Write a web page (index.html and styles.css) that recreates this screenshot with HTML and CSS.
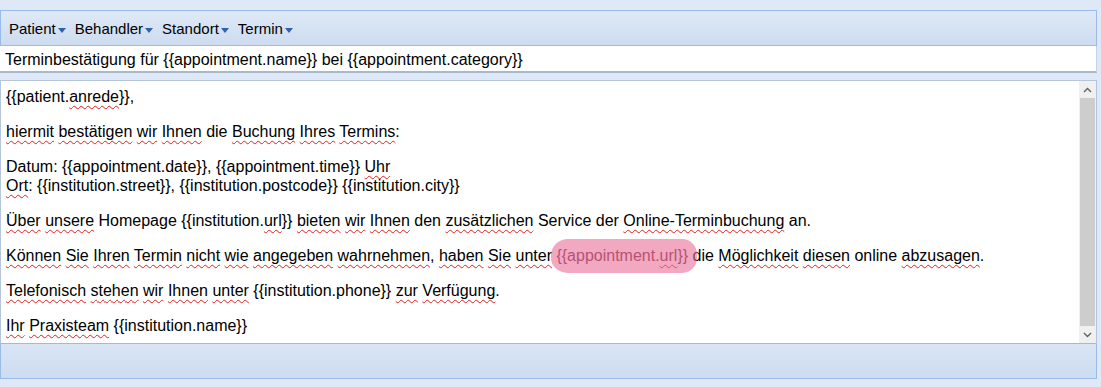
FILE: index.html
```html
<!DOCTYPE html>
<html lang="de">
<head>
    <meta charset="UTF-8">
    <title>Terminbestätigung</title>
    <link rel="stylesheet" href="styles.css">
</head>
<body>
    <div class="editor">
        <div class="toolbar">
            <span class="menu">Patient<i class="arrow"></i></span>
            <span class="menu">Behandler<i class="arrow"></i></span>
            <span class="menu">Standort<i class="arrow"></i></span>
            <span class="menu">Termin<i class="arrow"></i></span>
        </div>
        <div class="subject">Terminbestätigung für {{appointment.name}} bei {{appointment.category}}</div>
        <div class="body-box">
            <div class="text">
                <p>{{patient.<u>anrede</u>}},</p>
                <p><u>hiermit</u> <u>bestätigen</u> <u>wir</u> <u>Ihnen</u> die <u>Buchung</u> <u>Ihres</u> <u>Termins</u>:</p>
                <p>Datum: {{appointment.date}}, {{appointment.time}} <u>Uhr</u><br><u>Ort</u>: {{institution.street}}, {{institution.postcode}} {{institution.city}}</p>
                <p><u>Über</u> <u>unsere</u> Homepage {{institution.<u>url</u>}} <u>bieten</u> <u>wir</u> <u>Ihnen</u> den <u>zusätzlichen</u> Service der <u>Online-Terminbuchung</u> an.</p>
                <p><u>Können</u> <u>Sie</u> <u>Ihren</u> <u>Termin</u> <u>nicht</u> <u>wie</u> <u>angegeben</u> <u>wahrnehmen</u>, <u>haben</u> <u>Sie</u> <u>unter</u> <span class="mark">{{appointment.<u>url</u>}}</span> die <u>Möglichkeit</u> <u>diesen</u> online <u>abzusagen</u>.</p>
                <p><u>Telefonisch</u> <u>stehen</u> <u>wir</u> <u>Ihnen</u> <u>unter</u> {{institution.phone}} <u>zur</u> <u>Verfügung</u>.</p>
                <p><u>Ihr</u> <u>Praxisteam</u> {{institution.name}}</p>
            </div>
            <div class="scrollbar">
                <div class="scroll-btn">
                    <svg width="9" height="6" viewBox="0 0 9 6"><path d="M1 5 L4.5 1.5 L8 5" fill="none" stroke="#606060" stroke-width="1.4"/></svg>
                </div>
                <div class="scroll-thumb"></div>
                <div class="scroll-btn">
                    <svg width="9" height="6" viewBox="0 0 9 6"><path d="M1 1 L4.5 4.5 L8 1" fill="none" stroke="#606060" stroke-width="1.4"/></svg>
                </div>
            </div>
        </div>
        <div class="footer"></div>
    </div>
</body>
</html>
```

FILE: styles.css
```css
body {
    margin: 0;
    background-color: #dfe8f6;
    font-family: "Liberation Sans", Arial, sans-serif;
    color: #000;
}
.editor {
    width: 1097px;
    padding-top: 10px;
}
.toolbar {
    height: 36px;
    box-sizing: border-box;
    border: 1px solid #99bbe8;
    background: linear-gradient(#dfe9f7, #cddcf0);
    display: flex;
    align-items: center;
    padding-left: 8px;
    gap: 9px;
    font-size: 15px;
}
.menu {
    display: flex;
    align-items: center;
}
.arrow {
    display: inline-block;
    width: 0;
    height: 0;
    margin-left: 2px;
    margin-top: 4px;
    border-left: 4px solid transparent;
    border-right: 4px solid transparent;
    border-top: 5px solid #2f62a8;
}
.subject {
    height: 27px;
    box-sizing: border-box;
    background: #fff;
    border-bottom: 2px solid #a9b9cd;
    border-right: 1px solid #c3d3e8;
    padding: 2px 0 0 5px;
    font-size: 16px;
    line-height: 23px;
}
.body-box {
    margin-top: 7px;
    height: 264px;
    box-sizing: border-box;
    border: 1px solid #b5c5da;
    border-bottom-color: #99bbe8;
    background: #fff;
    display: flex;
}
.text {
    flex: 1;
    padding: 6px 5px 0;
    font-size: 16px;
    line-height: 19px;
}
.text p {
    margin: 0 0 16px;
}
.text u {
    text-decoration: underline wavy #e02020;
    text-decoration-thickness: 1px;
    text-underline-offset: 3px;
}
.mark {
    position: relative;
    color: #6a2a40;
}
.mark::after {
    content: "";
    position: absolute;
    left: -5px;
    right: -9px;
    top: -8px;
    bottom: -9px;
    background: rgba(232, 110, 150, 0.6);
    border-radius: 17px 15px 15px 17px / 16px 15px 15px 15px;
}
.scrollbar {
    width: 17px;
    background: #f0f0f0;
    display: flex;
    flex-direction: column;
}
.scroll-btn {
    height: 17px;
    display: flex;
    align-items: center;
    justify-content: center;
}
.scroll-thumb {
    flex: 1;
    background: #cdcdcd;
    margin: 0 1px;
}
.footer {
    height: 35px;
    box-sizing: border-box;
    border: 1px solid #99bbe8;
    border-top: none;
    background: linear-gradient(#d9e5f5, #cddcf0);
}
```
